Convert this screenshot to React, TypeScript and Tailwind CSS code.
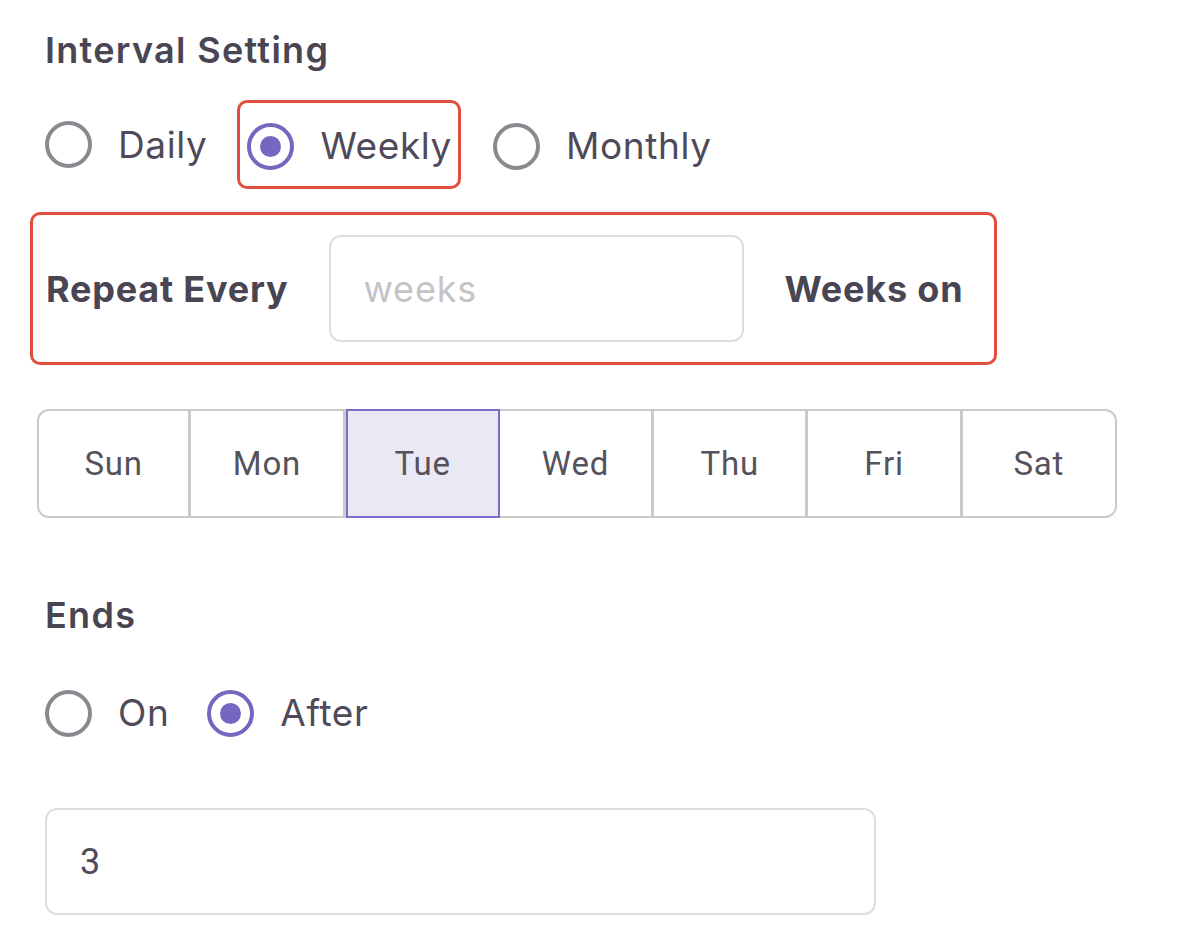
import type { JSX } from 'react'

const DAYS: string[] = ['Sun', 'Mon', 'Tue', 'Wed', 'Thu', 'Fri', 'Sat']
const ACTIVE_DAY: string = 'Tue'

interface RadioProperties {
  readonly label: string
  readonly checked?: boolean
}

const Radio = ({ label, checked = false }: RadioProperties): JSX.Element => (
  <div className="flex items-center gap-[26px]">
    <span
      className={`flex h-[47px] w-[47px] shrink-0 items-center justify-center rounded-full border-[4px] ${
        checked ? 'border-[#7566c0]' : 'border-[#8b898f]'
      }`}
    >
      {checked && <span className="h-[21px] w-[21px] rounded-full bg-[#7566c0]" />}
    </span>
    <span className="text-[37px] leading-[48px] tracking-[0.6px] text-[#4f4a59]">{label}</span>
  </div>
)

const App = (): JSX.Element => (
  <div className="min-h-screen w-full bg-white pl-[45px] pt-[29px] font-['Inter',sans-serif] text-[#4a4553]">
    {/* Interval */}
    <h2 className="text-[36px] leading-[42px] font-semibold tracking-[1.3px]">Interval Setting</h2>

    <div className="mt-[29px] flex items-center">
      <Radio label="Daily" />
      <div className="ml-[30px] flex h-[89px] items-center rounded-[10px] border-[3px] border-[#e14e3d] pt-[3px] pr-[6px] pl-[7px]">
        <Radio checked={true} label="Weekly" />
      </div>
      <div className="ml-[32px] pt-[3px]">
        <Radio label="Monthly" />
      </div>
    </div>

    {/* Repeat every */}
    <div className="-ml-[15px] mt-[23px] flex h-[153px] w-[967px] items-center rounded-[10px] border-[3px] border-[#e14e3d] pl-[13px]">
      <span className="text-[36px] font-bold tracking-[0.8px] whitespace-nowrap">Repeat Every</span>
      <div className="ml-[40px] flex h-[107px] w-[415px] items-center rounded-[12px] border-2 border-[#dedee0] pl-[33px]">
        <span className="text-[36px] tracking-[0.8px] text-[#c4c3c8]">weeks</span>
      </div>
      <span className="ml-[41px] text-[36px] font-bold tracking-[0.8px] whitespace-nowrap">Weeks on</span>
    </div>

    {/* Days */}
    <div className="-ml-[8px] mt-[44px] grid h-[109px] w-[1080px] grid-cols-7 font-['Roboto',sans-serif]">
      {DAYS.map((day: string, index: number): JSX.Element => {
        const active: boolean = day === ACTIVE_DAY
        const first: boolean = index === 0
        const last: boolean = index === DAYS.length - 1
        return (
          <div
            className={`flex items-center justify-center text-[33px] tracking-[0.8px] text-[#55525c] ${
              active
                ? 'border-2 border-[#7a6cc8] bg-[#ebe8f6]'
                : `border-y-2 border-[#cacaca] ${last ? 'border-r-2' : 'border-r-[3px]'}`
            } ${first ? 'rounded-l-[12px] border-l-2' : ''} ${last ? 'rounded-r-[12px]' : ''}`}
            key={day}
          >
            {day}
          </div>
        )
      })}
    </div>

    {/* Ends */}
    <h2 className="mt-[76px] text-[36px] leading-[42px] font-semibold tracking-[1.3px]">Ends</h2>

    <div className="mt-[53px] flex items-center gap-[38px]">
      <Radio label="On" />
      <Radio checked={true} label="After" />
    </div>

    <div className="mt-[71px] flex h-[107px] w-[831px] items-center rounded-[12px] border-2 border-[#dedee0] pl-[33px] font-['Roboto',sans-serif]">
      <span className="text-[36px] text-[#4f4a59]">3</span>
    </div>
  </div>
)

export default App
